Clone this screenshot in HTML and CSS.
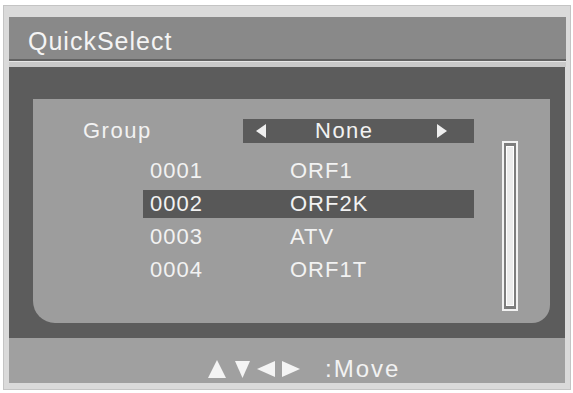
FILE: index.html
```html
<!DOCTYPE html>
<html>
<head>
<meta charset="utf-8">
<link rel="stylesheet" href="styles.css">
</head>
<body>
<div class="screen">
  <div class="title">QuickSelect</div>
  <div class="sep"></div>
  <div class="body">
    <div class="panel">
      <div class="main">
        <div class="group-row">
          <div class="group-label">Group</div>
          <div class="group-box">
            <svg class="arr" width="10" height="14" viewBox="0 0 10 14"><polygon points="10,0 10,14 0,7" fill="#efefef"/></svg>
            <span class="group-val">None</span>
            <svg class="arr" width="10" height="14" viewBox="0 0 10 14"><polygon points="0,0 0,14 10,7" fill="#efefef"/></svg>
          </div>
        </div>
        <div class="list">
          <div class="row"><span class="num">0001</span><span class="name">ORF1</span></div>
          <div class="row sel"><span class="num">0002</span><span class="name">ORF2K</span></div>
          <div class="row"><span class="num">0003</span><span class="name">ATV</span></div>
          <div class="row"><span class="num">0004</span><span class="name">ORF1T</span></div>
        </div>
      </div>
      <div class="scroll"><div class="thumb"></div></div>
    </div>
  </div>
  <div class="footer">
    <svg class="keys" width="92" height="18" viewBox="0 0 92 18">
      <polygon points="9,0 18,18 0,18" fill="#f4f4f4"/>
      <polygon points="27,1 42,1 34.5,18" fill="#f4f4f4"/>
      <polygon points="67,1 67,17 49,9" fill="#f4f4f4"/>
      <polygon points="74,1 74,17 92,9" fill="#f4f4f4"/>
    </svg>
    <span class="move">:Move</span>
  </div>
</div>
</body>
</html>
```

FILE: styles.css
```css
* { box-sizing: border-box; }
html, body { margin: 0; padding: 0; background: #ffffff; }
body {
  font-family: "Liberation Sans", Arial, sans-serif;
  color: #f2f2f2;
}
.screen {
  margin: 5px 0 0 3px;
  width: 568px;
  height: 385px;
  background: #dadada;
  border: 1px solid #c4c4c4;
  padding: 11px 4px 6px 5px;
  display: flex;
  flex-direction: column;
}
.title {
  height: 44px;
  background: #898989;
  border-bottom: 2px solid #626262;
  font-size: 25px;
  letter-spacing: 1px;
  line-height: 49px;
  padding-left: 19px;
  color: #f4f4f4;
}
.sep {
  height: 6px;
  background: #c9c9c9;
  border-top: 1px solid #e6e6e6;
}
.body {
  height: 271px;
  margin-right: 1px;
  background: #5c5c5c;
  padding: 32px 15px 15px 24px;
}
.panel {
  height: 224px;
  background: #9d9d9d;
  border-bottom-left-radius: 22px;
  border-bottom-right-radius: 18px;
  display: flex;
  padding-left: 50px;
}
.main {
  width: 391px;
}
.group-row {
  margin-top: 20px;
  height: 24px;
  display: flex;
  align-items: center;
}
.group-label {
  width: 160px;
  font-size: 22px;
  letter-spacing: 1.5px;
}
.group-box {
  width: 231px;
  height: 24px;
  background: #5b5b5b;
  display: flex;
  align-items: center;
  padding-left: 13px;
  padding-right: 27px;
}
.group-val {
  font-size: 22px;
  letter-spacing: 1.5px;
  margin-left: 49px;
  margin-right: auto;
}
.list {
  margin-top: 14px;
  margin-left: 60px;
  display: flex;
  flex-direction: column;
  gap: 5px;
}
.row {
  height: 28px;
  display: flex;
  align-items: center;
  font-size: 22px;
  letter-spacing: 1px;
  padding-left: 7px;
}
.row.sel { background: #585858; }
.num { width: 140px; }
.scroll {
  margin-left: 28px;
  margin-top: 42px;
  width: 16px;
  height: 170px;
  border: 2px solid #f2f2f2;
  background: #7d7d7d;
  padding: 3px 2px 3px 2px;
}
.thumb {
  width: 100%;
  height: 100%;
  background: #ececec;
  border: 1px solid #ffffff;
}
.footer {
  height: 45px;
  margin-right: 1px;
  background: #a0a0a0;
  display: flex;
  align-items: center;
  padding-left: 199px;
  padding-top: 17px;
}
.move {
  margin-left: 25px;
  font-size: 24px;
  letter-spacing: 2px;
}
```
